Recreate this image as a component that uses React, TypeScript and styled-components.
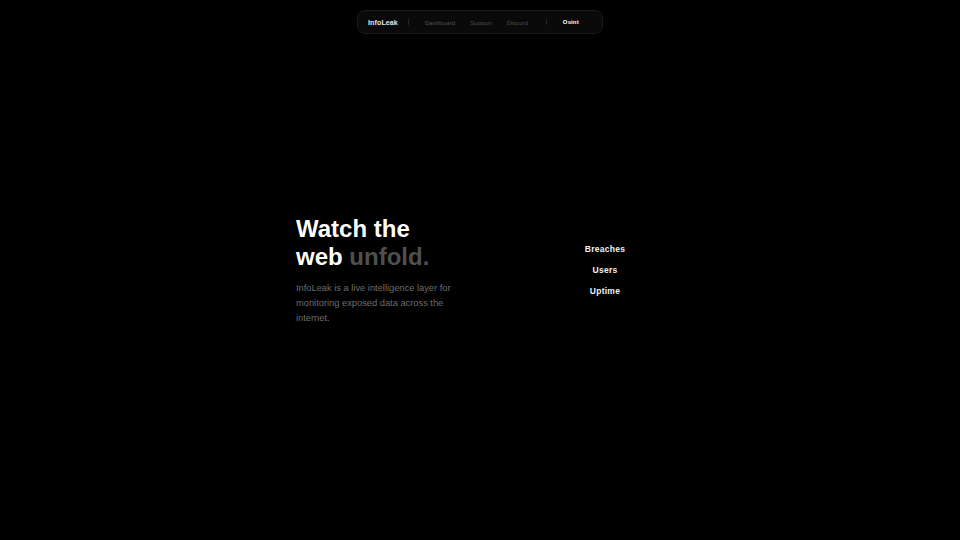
import React from "react";
import styled, { createGlobalStyle } from "styled-components";

const GlobalStyle = createGlobalStyle`
  html, body {
    margin: 0;
    padding: 0;
    background: #000000;
    font-family: "Liberation Sans", Arial, sans-serif;
    color: #ffffff;
  }
  * {
    box-sizing: border-box;
  }
`;

const Header = styled.header`
  position: fixed;
  top: 10px;
  left: 0;
  right: 0;
  display: flex;
  justify-content: center;
  z-index: 10;
`;

const NavBar = styled.nav`
  display: flex;
  align-items: center;
  width: 246px;
  height: 24px;
  padding: 0 0 0 10px;
  background: #0a0a0a;
  border: 1px solid #1a1a1a;
  border-radius: 8px;
`;

const Brand = styled.span`
  font-size: 7px;
  font-weight: 700;
  letter-spacing: 0.02em;
  color: #e8e8e8;
`;

const Divider = styled.span<{ $before: number }>`
  width: 1px;
  height: 6px;
  background: #262626;
  margin: 0 16px 0 ${(p) => p.$before}px;
`;

const NavLinks = styled.div`
  display: flex;
  align-items: center;
  gap: 15px;
`;

const NavLink = styled.a`
  font-size: 6.2px;
  color: #4e4e4e;
  text-decoration: none;
`;

const NavCta = styled.a`
  font-size: 6px;
  font-weight: 700;
  letter-spacing: 0.02em;
  color: #ffffff;
  text-decoration: none;
`;

const Main = styled.main`
  min-height: 540px;
  display: flex;
  align-items: center;
  justify-content: center;
`;

const Hero = styled.section`
  width: 368px;
  display: flex;
  align-items: center;
  justify-content: space-between;
`;

const Intro = styled.div`
  width: 170px;
`;

const Title = styled.h1`
  margin: 0;
  font-size: 24px;
  line-height: 28px;
  font-weight: 700;
  color: #ffffff;
`;

const Muted = styled.span`
  color: #4f4f4f;
`;

const Lead = styled.p`
  margin: 10px 0 0;
  max-width: 165px;
  font-size: 9.3px;
  line-height: 15px;
  color: #6c6c6c;
`;

const Stats = styled.ul`
  list-style: none;
  margin: 0;
  padding: 0;
  width: 118px;
  display: flex;
  flex-direction: column;
  align-items: center;
  gap: 11px;
`;

const Stat = styled.li`
  font-size: 8.5px;
  line-height: 10px;
  font-weight: 700;
  letter-spacing: 0.03em;
  color: #f2f2f2;
`;

const links = ["Dashboard", "Support", "Discord"];
const stats = ["Breaches", "Users", "Uptime"];

export default function App() {
  return (
    <>
      <GlobalStyle />
      <Header>
        <NavBar>
          <Brand>InfoLeak</Brand>
          <Divider $before={10} />
          <NavLinks>
            {links.map((l) => (
              <NavLink key={l} href="#">
                {l}
              </NavLink>
            ))}
          </NavLinks>
          <Divider $before={18} />
          <NavCta href="#">Osint</NavCta>
        </NavBar>
      </Header>
      <Main>
        <Hero>
          <Intro>
            <Title>
              Watch the
              <br />
              web <Muted>unfold.</Muted>
            </Title>
            <Lead>
              InfoLeak is a live intelligence layer for monitoring exposed data
              across the internet.
            </Lead>
          </Intro>
          <Stats>
            {stats.map((s) => (
              <Stat key={s}>{s}</Stat>
            ))}
          </Stats>
        </Hero>
      </Main>
    </>
  );
}
